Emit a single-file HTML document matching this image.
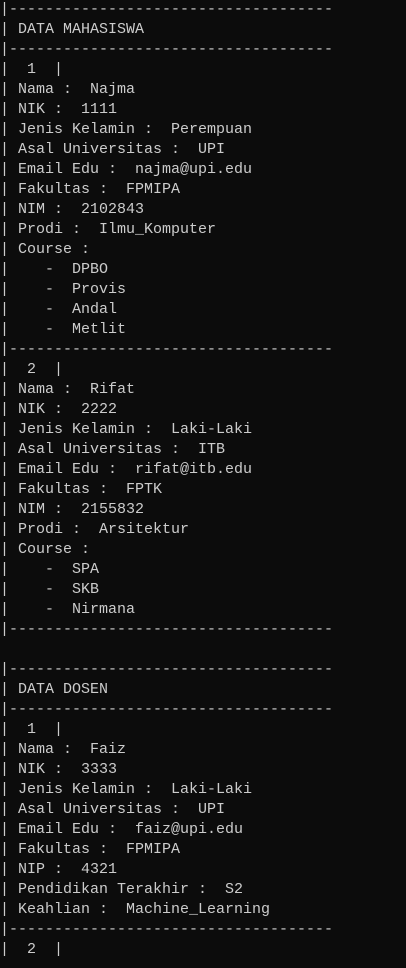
<!DOCTYPE html>
<html><head><meta charset="utf-8"><style>
html,body{margin:0;padding:0;background:#0c0c0c;width:406px;height:968px;overflow:hidden}
pre{margin:0;padding:0 0 0 0;font-family:"Liberation Mono",monospace;font-size:15px;line-height:20px;color:#cccccc;white-space:pre}
</style></head><body><pre>|------------------------------------
| DATA MAHASISWA
|------------------------------------
|  1  |
| Nama :  Najma
| NIK :  1111
| Jenis Kelamin :  Perempuan
| Asal Universitas :  UPI
| Email Edu :  najma@upi.edu
| Fakultas :  FPMIPA
| NIM :  2102843
| Prodi :  Ilmu_Komputer
| Course :
|    -  DPBO
|    -  Provis
|    -  Andal
|    -  Metlit
|------------------------------------
|  2  |
| Nama :  Rifat
| NIK :  2222
| Jenis Kelamin :  Laki-Laki
| Asal Universitas :  ITB
| Email Edu :  rifat@itb.edu
| Fakultas :  FPTK
| NIM :  2155832
| Prodi :  Arsitektur
| Course :
|    -  SPA
|    -  SKB
|    -  Nirmana
|------------------------------------

|------------------------------------
| DATA DOSEN
|------------------------------------
|  1  |
| Nama :  Faiz
| NIK :  3333
| Jenis Kelamin :  Laki-Laki
| Asal Universitas :  UPI
| Email Edu :  faiz@upi.edu
| Fakultas :  FPMIPA
| NIP :  4321
| Pendidikan Terakhir :  S2
| Keahlian :  Machine_Learning
|------------------------------------
|  2  |</pre></body></html>
